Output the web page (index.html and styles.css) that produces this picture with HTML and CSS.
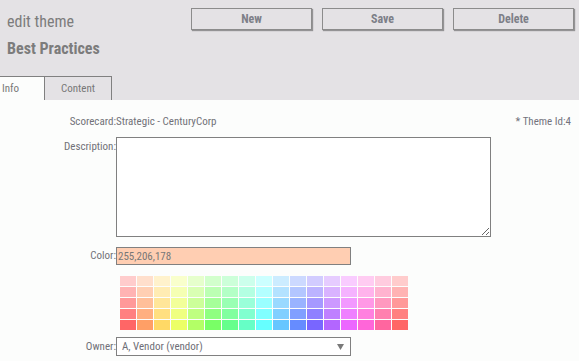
FILE: index.html
```html
<!DOCTYPE html>
<html>
<head>
<meta charset="utf-8">
<title>edit theme</title>
<link rel="stylesheet" href="styles.css">
</head>
<body>
<div class="header">
  <div class="top">
    <div class="titles">
      <div class="sub">edit theme</div>
      <div class="name">Best Practices</div>
    </div>
    <div class="actions">
      <button class="btn">New</button>
      <button class="btn">Save</button>
      <button class="btn">Delete</button>
    </div>
  </div>
  <div class="tabs">
    <div class="tab tab-info active">Info</div>
    <div class="tab tab-content">Content</div>
  </div>
</div>
<div class="form">
  <div class="row row-score">
    <div class="label">Scorecard:</div>
    <div class="value">Strategic - CenturyCorp</div>
    <div class="theme-id">* Theme Id:4</div>
  </div>
  <div class="row row-desc">
    <div class="label label-top">Description:</div>
    <textarea class="desc"></textarea>
  </div>
  <div class="row row-color">
    <div class="label">Color:</div>
    <input class="color-input" type="text" value="255,206,178">
  </div>
  <div class="palette">
    <div class="cell" style="background:hsl(0,100%,90%)"></div>
    <div class="cell" style="background:hsl(22.5,100%,90%)"></div>
    <div class="cell" style="background:hsl(45,100%,90%)"></div>
    <div class="cell" style="background:hsl(67.5,100%,90%)"></div>
    <div class="cell" style="background:hsl(90,100%,90%)"></div>
    <div class="cell" style="background:hsl(112.5,100%,90%)"></div>
    <div class="cell" style="background:hsl(135,100%,90%)"></div>
    <div class="cell" style="background:hsl(157.5,100%,90%)"></div>
    <div class="cell" style="background:hsl(180,100%,90%)"></div>
    <div class="cell" style="background:hsl(202.5,100%,90%)"></div>
    <div class="cell" style="background:hsl(225,100%,90%)"></div>
    <div class="cell" style="background:hsl(247.5,100%,90%)"></div>
    <div class="cell" style="background:hsl(270,100%,90%)"></div>
    <div class="cell" style="background:hsl(292.5,100%,90%)"></div>
    <div class="cell" style="background:hsl(315,100%,90%)"></div>
    <div class="cell" style="background:hsl(337.5,100%,90%)"></div>
    <div class="cell" style="background:hsl(360,100%,90%)"></div>

    <div class="cell" style="background:hsl(0,100%,85%)"></div>
    <div class="cell" style="background:hsl(22.5,100%,85%)"></div>
    <div class="cell" style="background:hsl(45,100%,85%)"></div>
    <div class="cell" style="background:hsl(67.5,100%,85%)"></div>
    <div class="cell" style="background:hsl(90,100%,85%)"></div>
    <div class="cell" style="background:hsl(112.5,100%,85%)"></div>
    <div class="cell" style="background:hsl(135,100%,85%)"></div>
    <div class="cell" style="background:hsl(157.5,100%,85%)"></div>
    <div class="cell" style="background:hsl(180,100%,85%)"></div>
    <div class="cell" style="background:hsl(202.5,100%,85%)"></div>
    <div class="cell" style="background:hsl(225,100%,85%)"></div>
    <div class="cell" style="background:hsl(247.5,100%,85%)"></div>
    <div class="cell" style="background:hsl(270,100%,85%)"></div>
    <div class="cell" style="background:hsl(292.5,100%,85%)"></div>
    <div class="cell" style="background:hsl(315,100%,85%)"></div>
    <div class="cell" style="background:hsl(337.5,100%,85%)"></div>
    <div class="cell" style="background:hsl(360,100%,85%)"></div>

    <div class="cell" style="background:hsl(0,100%,80%)"></div>
    <div class="cell" style="background:hsl(22.5,100%,80%)"></div>
    <div class="cell" style="background:hsl(45,100%,80%)"></div>
    <div class="cell" style="background:hsl(67.5,100%,80%)"></div>
    <div class="cell" style="background:hsl(90,100%,80%)"></div>
    <div class="cell" style="background:hsl(112.5,100%,80%)"></div>
    <div class="cell" style="background:hsl(135,100%,80%)"></div>
    <div class="cell" style="background:hsl(157.5,100%,80%)"></div>
    <div class="cell" style="background:hsl(180,100%,80%)"></div>
    <div class="cell" style="background:hsl(202.5,100%,80%)"></div>
    <div class="cell" style="background:hsl(225,100%,80%)"></div>
    <div class="cell" style="background:hsl(247.5,100%,80%)"></div>
    <div class="cell" style="background:hsl(270,100%,80%)"></div>
    <div class="cell" style="background:hsl(292.5,100%,80%)"></div>
    <div class="cell" style="background:hsl(315,100%,80%)"></div>
    <div class="cell" style="background:hsl(337.5,100%,80%)"></div>
    <div class="cell" style="background:hsl(360,100%,80%)"></div>

    <div class="cell" style="background:hsl(0,100%,75%)"></div>
    <div class="cell" style="background:hsl(22.5,100%,75%)"></div>
    <div class="cell" style="background:hsl(45,100%,75%)"></div>
    <div class="cell" style="background:hsl(67.5,100%,75%)"></div>
    <div class="cell" style="background:hsl(90,100%,75%)"></div>
    <div class="cell" style="background:hsl(112.5,100%,75%)"></div>
    <div class="cell" style="background:hsl(135,100%,75%)"></div>
    <div class="cell" style="background:hsl(157.5,100%,75%)"></div>
    <div class="cell" style="background:hsl(180,100%,75%)"></div>
    <div class="cell" style="background:hsl(202.5,100%,75%)"></div>
    <div class="cell" style="background:hsl(225,100%,75%)"></div>
    <div class="cell" style="background:hsl(247.5,100%,75%)"></div>
    <div class="cell" style="background:hsl(270,100%,75%)"></div>
    <div class="cell" style="background:hsl(292.5,100%,75%)"></div>
    <div class="cell" style="background:hsl(315,100%,75%)"></div>
    <div class="cell" style="background:hsl(337.5,100%,75%)"></div>
    <div class="cell" style="background:hsl(360,100%,75%)"></div>

    <div class="cell" style="background:hsl(0,100%,70%)"></div>
    <div class="cell" style="background:hsl(22.5,100%,70%)"></div>
    <div class="cell" style="background:hsl(45,100%,70%)"></div>
    <div class="cell" style="background:hsl(67.5,100%,70%)"></div>
    <div class="cell" style="background:hsl(90,100%,70%)"></div>
    <div class="cell" style="background:hsl(112.5,100%,70%)"></div>
    <div class="cell" style="background:hsl(135,100%,70%)"></div>
    <div class="cell" style="background:hsl(157.5,100%,70%)"></div>
    <div class="cell" style="background:hsl(180,100%,70%)"></div>
    <div class="cell" style="background:hsl(202.5,100%,70%)"></div>
    <div class="cell" style="background:hsl(225,100%,70%)"></div>
    <div class="cell" style="background:hsl(247.5,100%,70%)"></div>
    <div class="cell" style="background:hsl(270,100%,70%)"></div>
    <div class="cell" style="background:hsl(292.5,100%,70%)"></div>
    <div class="cell" style="background:hsl(315,100%,70%)"></div>
    <div class="cell" style="background:hsl(337.5,100%,70%)"></div>
    <div class="cell" style="background:hsl(360,100%,70%)"></div>
  </div>
  <div class="row row-owner">
    <div class="label">Owner:</div>
    <div class="select">
      <span class="select-text">A, Vendor (vendor)</span>
      <svg class="select-arrow" width="7" height="6" viewBox="0 0 7 6"><path d="M0 0H7L3.5 6Z" fill="#7a7a7a"/></svg>
    </div>
  </div>
</div>
</body>
</html>
```

FILE: styles.css
```css
* { box-sizing: border-box; }

body {
  margin: 0;
  background: #fcfdfc;
  font-family: "Roboto Condensed", Roboto, "Liberation Sans", sans-serif;
  font-stretch: 87.5%;
  color: #707070;
  font-size: 11px;
}

.header {
  height: 100px;
  background: #e4e2e5;
  display: flex;
  flex-direction: column;
}

.top {
  flex: 1;
  display: flex;
  justify-content: space-between;
  padding: 8px 5px 0 7px;
}

.titles {
  padding-top: 5px;
  color: #7c7c7c;
}

.sub {
  font-size: 16px;
  line-height: 18px;
}

.name {
  margin-top: 9px;
  font-size: 16px;
  line-height: 18px;
  font-weight: bold;
}

.actions {
  display: flex;
  gap: 10px;
  align-items: flex-start;
}

.btn {
  width: 121px;
  height: 22px;
  margin: 0;
  padding: 0;
  background: #e4e2e5;
  border: 1px solid #8c8c8c;
  box-shadow: 1px 1px 1px rgba(0, 0, 0, 0.35);
  font-family: inherit;
  font-stretch: inherit;
  font-weight: bold;
  font-size: 12px;
  color: #7d7f88;
}

.tabs {
  display: flex;
  height: 24px;
}

.tab {
  height: 24px;
  border-top: 1px solid #808080;
  border-right: 1px solid #808080;
  font-size: 11px;
  line-height: 24px;
  color: #777;
}

.tab-info {
  width: 45px;
  padding-left: 2px;
  background: #fcfdfc;
}

.tab-content {
  width: 67px;
  text-align: center;
  background: #e4e2e5;
}

.form {
  padding-top: 15px;
}

.row {
  display: flex;
}

.label {
  width: 116px;
  flex: none;
  text-align: right;
  color: #717178;
  line-height: 14px;
}

.value {
  line-height: 14px;
  color: #717178;
}

.theme-id {
  margin-left: auto;
  padding-right: 8px;
  line-height: 14px;
  color: #73737c;
}

.row-desc {
  margin-top: 8px;
}

.label-top {
  padding-top: 3px;
}

.desc {
  display: block;
  width: 375px;
  height: 100px;
  margin: 0;
  border: 1px solid #808080;
  background: #fff;
  resize: both;
  outline: none;
}

.row-color {
  margin-top: 10px;
  align-items: center;
}

.color-input {
  width: 235px;
  height: 18px;
  margin: 0;
  padding: 0 1px;
  border: 1px solid #808080;
  background: #ffceb2;
  font-family: inherit;
  font-stretch: inherit;
  font-size: 11px;
  color: #777;
  outline: none;
}

.palette {
  margin: 11px 0 0 120px;
  display: grid;
  grid-template-columns: repeat(17, 16px);
  grid-auto-rows: 10px;
  gap: 1px;
}

.row-owner {
  margin-top: 7px;
  align-items: center;
}

.select {
  width: 235px;
  height: 19px;
  border: 1px solid #808080;
  background: #fff;
  display: flex;
  align-items: center;
  justify-content: space-between;
  padding: 0 6px 0 5px;
}

.select-text {
  font-size: 11px;
  color: #6e6e76;
}

.select-arrow {
  display: block;
}
```
